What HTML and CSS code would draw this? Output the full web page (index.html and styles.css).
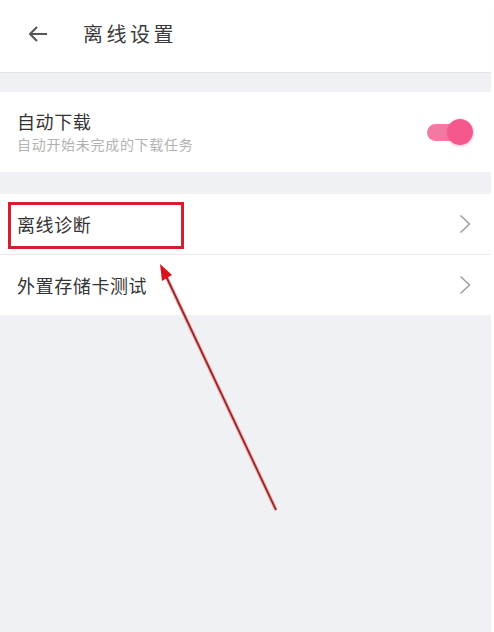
FILE: index.html
```html
<!DOCTYPE html>
<html lang="zh">
<head>
<meta charset="utf-8">
<link rel="stylesheet" href="styles.css">
</head>
<body>
<div class="page">
  <header class="topbar">
    <svg class="back" width="22" height="18" viewBox="0 0 22 18"><path d="M20 9H3M10 2L3 9l7 7" fill="none" stroke="#555" stroke-width="2"/></svg>
    <h1 class="title">离线设置</h1>
  </header>
  <div class="gap gap-top"></div>
  <section class="row row-toggle">
    <div class="texts">
      <div class="main">自动下载</div>
      <div class="sub">自动开始未完成的下载任务</div>
    </div>
    <div class="switch"><span class="track"></span><span class="knob"></span></div>
  </section>
  <div class="gap gap-mid"></div>
  <section class="list">
    <div class="row row-link highlighted">
      <span class="main">离线诊断</span>
      <svg class="chev" width="12" height="20" viewBox="0 0 12 20"><path d="M1.5 1.5L10.5 10L1.5 18.5" fill="none" stroke="#9a9a9a" stroke-width="1.4"/></svg>
      <span class="mark"></span>
    </div>
    <div class="divider"></div>
    <div class="row row-link">
      <span class="main">外置存储卡测试</span>
      <svg class="chev" width="12" height="20" viewBox="0 0 12 20"><path d="M1.5 1.5L10.5 10L1.5 18.5" fill="none" stroke="#9a9a9a" stroke-width="1.4"/></svg>
    </div>
  </section>
  <div class="rest"></div>
  <svg class="annot" width="494" height="632" viewBox="0 0 494 632">
    <line x1="276" y1="510" x2="166" y2="276" stroke="#ffb3b3" stroke-width="4"/>
    <line x1="276" y1="510" x2="166" y2="276" stroke="#8a2a2e" stroke-width="1.8"/>
    <polygon points="160,264 172,275 162,281" fill="#d8121c"/>
  </svg>
</div>
</body>
</html>
```
FILE: styles.css
```css
html, body {
  margin: 0;
  padding: 0;
  background: #ffffff;
}
body {
  font-family: "Noto Sans CJK SC", "Noto Sans", sans-serif;
  color: #333;
}
.page {
  position: relative;
  width: 491px;
  height: 632px;
  display: flex;
  flex-direction: column;
  background: #eff1f4;
}
.topbar {
  height: 72px;
  background: #fff;
  display: flex;
  align-items: center;
  padding-left: 27px;
  box-shadow: 0 1px 1px rgba(0,0,0,0.05);
  flex: none;
}
.back {
  display: block;
  margin-top: -4px;
}
.title {
  margin: 0 0 0 34px;
  font-size: 20px;
  font-weight: 400;
  letter-spacing: 3.5px;
  color: #3a3a3a;
  margin-top: -5px;
}
.gap-top { height: 20px; flex: none; }
.gap-mid { height: 22px; flex: none; }
.row {
  background: #fff;
  display: flex;
  align-items: center;
  justify-content: space-between;
  padding: 0 20px 0 17px;
  flex: none;
}
.row-toggle { height: 80px; }
.texts { display: flex; flex-direction: column; }
.main {
  font-size: 18px;
  letter-spacing: 0.6px;
  color: #333;
  line-height: 24px;
}
.row-toggle .main { margin-top: -3px; }
.sub {
  font-size: 14px;
  letter-spacing: 0.7px;
  color: #b2b2b2;
  line-height: 18px;
  margin-top: 2px;
}
.switch {
  position: relative;
  width: 46px;
  height: 28px;
  margin-right: -2px;
}
.track {
  position: absolute;
  left: 0;
  top: 6px;
  width: 34px;
  height: 17px;
  border-radius: 9px;
  background: #f27aa2;
}
.knob {
  position: absolute;
  right: 0;
  top: 1px;
  width: 26px;
  height: 26px;
  border-radius: 50%;
  background: #f4588c;
  box-shadow: 0 1px 3px rgba(240,80,130,0.35);
}
.list { background: #fff; flex: none; }
.row-link { height: 60px; position: relative; }
.chev { display: block; }
.divider { height: 1px; background: #e9eaec; }
.mark {
  position: absolute;
  left: 8px;
  top: 8px;
  width: 170px;
  height: 41px;
  border: 3px solid #d3202c;
}
.rest { flex: 1; }
.annot {
  position: absolute;
  left: 0;
  top: 0;
  pointer-events: none;
}
```
